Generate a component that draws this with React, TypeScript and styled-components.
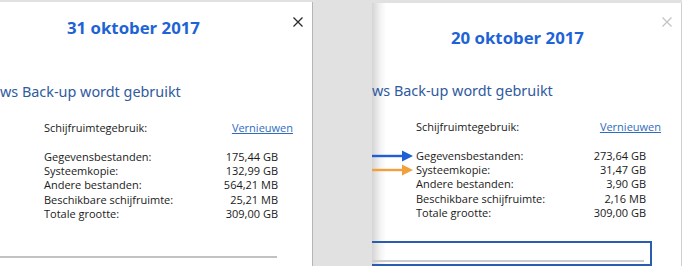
import React from 'react'
import styled, { createGlobalStyle } from 'styled-components'

const GlobalStyle = createGlobalStyle`
  html, body {
    margin: 0;
    padding: 0;
    background: #e1e1e1;
  }
`

const Screen = styled.div`
  display: flex;
  width: 682px;
  height: 266px;
  overflow: hidden;
  background: #e1e1e1;
  font-family: 'Open Sans', 'Noto Sans', sans-serif;
`

const Panel = styled.div<{ $top: number; $width: number; $shadow?: boolean }>`
  position: relative;
  display: flex;
  flex-direction: column;
  box-sizing: border-box;
  width: ${({ $width }) => $width}px;
  margin-top: ${({ $top }) => $top}px;
  padding-left: 44px;
  background: ${({ $shadow }) =>
    $shadow
      ? 'linear-gradient(to right, #d4d4d4 0px, #f2f2f2 8px, #ffffff 14px)'
      : '#ffffff'};
  border-right: 1px solid ${({ $shadow }) => ($shadow ? '#cfcfcf' : '#b4b4b4')};
  overflow: hidden;
`

const Gutter = styled.div`
  width: 59px;
  flex-shrink: 0;
`

const Close = styled.div<{ $light?: boolean; $top: number }>`
  position: absolute;
  top: ${({ $top }) => $top}px;
  right: 9px;
  width: 10px;
  height: 10px;
  color: ${({ $light }) => ($light ? '#c4c4c4' : '#2a2a2a')};
`

const Title = styled.div<{ $top: number; $shift: number }>`
  margin-top: ${({ $top }) => $top}px;
  margin-left: ${({ $shift }) => $shift}px;
  font-size: 16.8px;
  line-height: 20px;
  font-weight: 700;
  color: #1d63d6;
  white-space: nowrap;
`

const Heading = styled.div<{ $top: number }>`
  margin-top: ${({ $top }) => $top}px;
  margin-left: -44px;
  font-family: 'Noto Sans', 'Open Sans', sans-serif;
  font-size: 14.4px;
  line-height: 20px;
  color: #2f5aa0;
  white-space: nowrap;
`

const UsageRow = styled.div<{ $end: number }>`
  display: flex;
  justify-content: space-between;
  width: ${({ $end }) => $end}px;
  margin-top: 19px;
  font-size: 11px;
  line-height: 14px;
  color: #1a1a1a;
`

const Link = styled.span`
  color: #2f6cc0;
  text-decoration: underline;
`

const Stats = styled.div<{ $end: number }>`
  display: grid;
  grid-template-columns: 1fr auto;
  width: ${({ $end }) => $end}px;
  margin-top: 15px;
  font-size: 11px;
  line-height: 14.2px;
  color: #1a1a1a;
`

const Value = styled.span`
  text-align: right;
`

const Divider = styled.div<{ $width: number }>`
  margin-top: 35px;
  margin-left: -44px;
  width: ${({ $width }) => $width}px;
  height: 2px;
  background: #c2c2c2;
`

const BlueBox = styled.div`
  margin-top: 21px;
  margin-left: -44px;
  width: 280px;
  height: 40px;
  box-sizing: border-box;
  border: 2px solid #2a5db0;
  border-left: none;
  padding-top: 17px;
`

const BoxLine = styled.div`
  width: 272px;
  height: 2px;
  background: #cccccc;
`

const Arrow = styled.svg<{ $top: number }>`
  position: absolute;
  left: 0;
  top: ${({ $top }) => $top}px;
`

const CloseIcon = () => (
  <svg width="10" height="10" viewBox="0 0 10 10">
    <path d="M0.5 0.5 L9.5 9.5 M9.5 0.5 L0.5 9.5" stroke="currentColor" strokeWidth="1.3" fill="none" />
  </svg>
)

const PointerArrow = ({ top, color }: { top: number; color: string }) => (
  <Arrow $top={top} width="44" height="12" viewBox="0 0 44 12">
    <path d="M0 6 H32" stroke={color} strokeWidth="2.4" />
    <path d="M30 0.5 L41 6 L30 11.5 Z" fill={color} />
  </Arrow>
)

interface UsageProps {
  date: string
  values: string[]
  right?: boolean
}

const labels = [
  'Gegevensbestanden:',
  'Systeemkopie:',
  'Andere bestanden:',
  'Beschikbare schijfruimte:',
  'Totale grootte:',
]

const UsagePanel = ({ date, values, right }: UsageProps) => (
  <Panel $top={right ? 3 : 2} $width={right ? 310 : 313} $shadow={right}>
    <Close $light={right} $top={right ? 7 : 8}>
      <CloseIcon />
    </Close>

    <Title $top={right ? 25 : 16} $shift={right ? 35 : 23}>
      {date}
    </Title>

    <Heading $top={right ? 33 : 44}>ws Back-up wordt gebruikt</Heading>

    <UsageRow $end={right ? 245 : 249}>
      <span>Schijfruimtegebruik:</span>
      <Link>Vernieuwen</Link>
    </UsageRow>

    <Stats $end={right ? 230 : 234}>
      {labels.map((label, i) => (
        <React.Fragment key={label}>
          <span>{label}</span>
          <Value>{values[i]}</Value>
        </React.Fragment>
      ))}
    </Stats>

    {right ? (
      <BlueBox>
        <BoxLine />
      </BlueBox>
    ) : (
      <Divider $width={277} />
    )}

    {right && (
      <>
        <PointerArrow top={147} color="#1f5fd6" />
        <PointerArrow top={161} color="#f0a03c" />
      </>
    )}
  </Panel>
)

const App = () => (
  <>
    <GlobalStyle />
    <Screen>
      <UsagePanel
        date="31 oktober 2017"
        values={['175,44 GB', '132,99 GB', '564,21 MB', '25,21 MB', '309,00 GB']}
      />
      <Gutter />
      <UsagePanel
        right
        date="20 oktober 2017"
        values={['273,64 GB', '31,47 GB', '3,90 GB', '2,16 MB', '309,00 GB']}
      />
    </Screen>
  </>
)

export default App
